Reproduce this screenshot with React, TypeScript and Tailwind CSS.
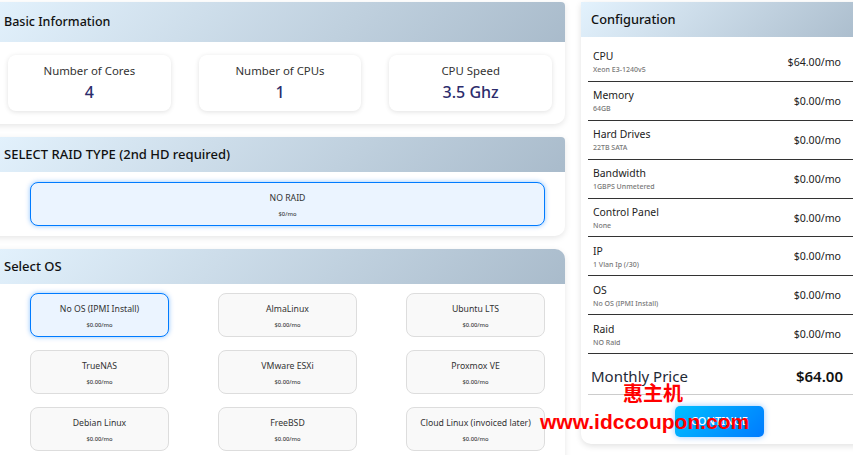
import React from "react";

const headerBg = "bg-[linear-gradient(135deg,#e3f2fd,#a9bbcb)]";

const stats = [
  { label: "Number of Cores", value: "4" },
  { label: "Number of CPUs", value: "1" },
  { label: "CPU Speed", value: "3.5 Ghz" },
];

const osList = [
  "No OS (IPMI Install)",
  "AlmaLinux",
  "Ubuntu LTS",
  "TrueNAS",
  "VMware ESXi",
  "Proxmox VE",
  "Debian Linux",
  "FreeBSD",
  "Cloud Linux (invoiced later)",
];

const config = [
  { name: "CPU", sub: "Xeon E3-1240v5", price: "$64.00/mo" },
  { name: "Memory", sub: "64GB", price: "$0.00/mo" },
  { name: "Hard Drives", sub: "22TB SATA", price: "$0.00/mo" },
  { name: "Bandwidth", sub: "1GBPS Unmetered", price: "$0.00/mo" },
  { name: "Control Panel", sub: "None", price: "$0.00/mo" },
  { name: "IP", sub: "1 Vlan Ip (/30)", price: "$0.00/mo" },
  { name: "OS", sub: "No OS (IPMI Install)", price: "$0.00/mo" },
  { name: "Raid", sub: "NO Raid", price: "$0.00/mo" },
];

const Option = (props: { name: string; price: string; active?: boolean }) => {
  return (
    <div
      className={`h-[44px] rounded-[8px] border flex flex-col items-center pt-[7px] ${
        props.active
          ? "border-[#007bff] bg-[#ebf4ff] shadow-[0_0_5px_rgba(0,123,255,0.45)]"
          : "border-[#dddddd] bg-[#f9f9f9]"
      }`}
    >
      <p className="text-[8.7px] leading-[16px] text-[#333333] whitespace-nowrap">{props.name}</p>
      <p className="text-[5.8px] leading-[8px] mt-[3.5px] font-medium text-[#444444]">{props.price}</p>
    </div>
  );
};

const App = () => {
  return (
    <div className="relative w-[853px] h-[455px] overflow-hidden bg-white flex items-start gap-[16px] pt-[2px] font-['Noto_Sans',sans-serif] text-[#111111]">
      <div className="w-[577px] -ml-[12px] shrink-0 flex flex-col gap-[13px]">
        <section className="h-[122px] bg-white rounded-[10px] rounded-tr-[4px] shadow-[0_2px_6px_rgba(0,0,0,0.1)] overflow-hidden">
          <h2 className={`h-[40px] pl-[16px] flex items-center text-[12.5px] font-medium ${headerBg}`}>
            Basic Information
          </h2>
          <div className="grid grid-cols-3 gap-[28px] pl-[20px] pr-[13px] pt-[13px]">
            {stats.map((s) => (
              <div
                key={s.label}
                className="h-[56px] rounded-[8px] bg-white shadow-[0_1px_5px_rgba(0,0,0,0.12)] flex flex-col items-center pt-[7px]"
              >
                <p className="text-[11.4px] leading-[18px] text-[#333333]">{s.label}</p>
                <p className="text-[16px] leading-[22px] mt-[1px] font-medium text-[#2c2c6c]">{s.value}</p>
              </div>
            ))}
          </div>
        </section>

        <section className="h-[99px] bg-white rounded-[10px] rounded-tr-[4px] shadow-[0_2px_6px_rgba(0,0,0,0.1)] overflow-hidden">
          <h2 className={`h-[35px] pl-[16px] flex items-center text-[13px] font-medium ${headerBg}`}>
            SELECT RAID TYPE (2nd HD required)
          </h2>
          <div className="pl-[42px] pr-[20px] pt-[10px]">
            <Option name="NO RAID" price="$0/mo" active />
          </div>
        </section>

        <section className="h-[220px] bg-white rounded-[10px] shadow-[0_2px_6px_rgba(0,0,0,0.1)] overflow-hidden">
          <h2 className={`h-[35px] pl-[16px] flex items-center text-[13px] font-medium ${headerBg}`}>
            Select OS
          </h2>
          <div className="grid grid-cols-3 gap-x-[49px] gap-y-[13px] pl-[42px] pr-[20px] pt-[9px]">
            {osList.map((os, i) => (
              <Option key={os} name={os} price="$0.00/mo" active={i === 0} />
            ))}
          </div>
        </section>
      </div>

      <aside className="w-[290px] shrink-0 h-[442px] bg-white rounded-[10px] rounded-tl-none shadow-[0_2px_6px_rgba(0,0,0,0.12)] overflow-hidden flex flex-col">
        <h2 className={`h-[35px] shrink-0 pl-[10px] flex items-center text-[12.8px] font-medium ${headerBg}`}>
          Configuration
        </h2>
        <div className="pl-[7px] pt-[6px]">
          {config.map((c) => (
            <div
              key={c.name}
              className="h-[38.9px] pt-[2px] border-b border-[#333333] flex items-center justify-between pl-[5px] pr-[30px]"
            >
              <div className="-mt-[1px]">
                <p className="text-[10.4px] leading-[14px] text-[#222222]">{c.name}</p>
                <p className="text-[7px] leading-[10px] mt-[2px] font-medium text-[#777777]">{c.sub}</p>
              </div>
              <p className="text-[10.6px] text-[#222222]">{c.price}</p>
            </div>
          ))}
        </div>
        <div className="ml-[7px] h-[41px] shrink-0 border-b border-[#cccccc] flex items-center justify-between pl-[3px] pr-[28px] pt-[5px]">
          <span className="text-[15px] text-[#1f2a37]">Monthly Price</span>
          <span className="text-[15px] font-semibold text-[#111111]">$64.00</span>
        </div>
        <div className="pt-[11px] pl-[94px]">
          <button className="w-[89px] h-[31px] rounded-[5px] bg-[linear-gradient(135deg,#00bfff,#007bff)] shadow-[0_0_6px_rgba(0,123,255,0.4)] text-[11px] font-medium text-white">
            CONTINUE
          </button>
        </div>
      </aside>

      <div className="absolute left-[540px] top-[381px] w-[212px] flex flex-col items-start text-[#ff0000] font-['Liberation_Sans','Noto_Sans_CJK_SC',sans-serif] font-bold pointer-events-none">
        <span className="text-[20px] leading-[24px] ml-[83px] font-['Noto_Sans_CJK_SC',sans-serif]">惠主机</span>
        <span className="text-[21px] leading-[24px] mt-[5px] whitespace-nowrap">www.idccoupon.com</span>
      </div>
    </div>
  );
};

export default App;
